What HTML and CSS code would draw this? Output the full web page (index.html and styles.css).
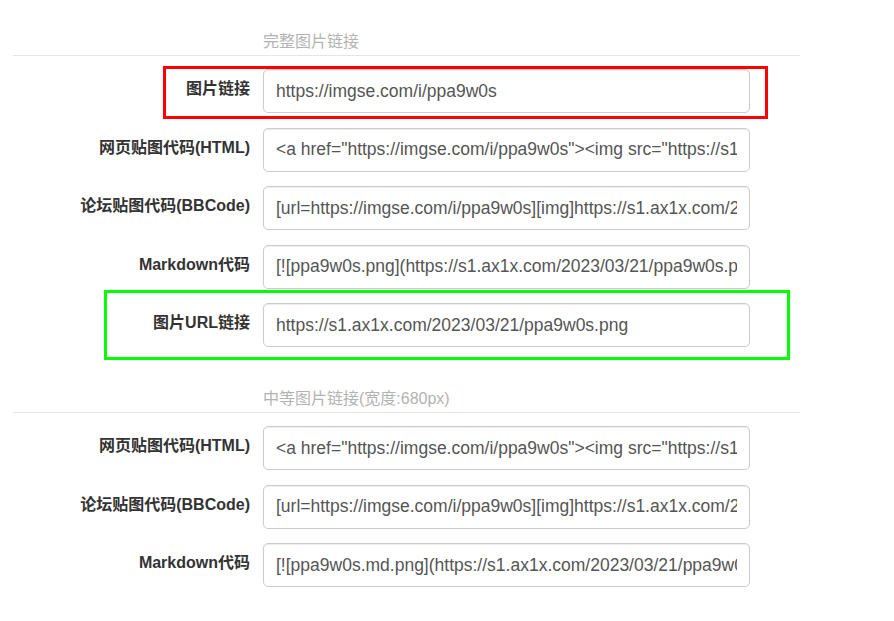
FILE: index.html
```html
<!DOCTYPE html>
<html lang="zh-CN">
<head>
<meta charset="utf-8">
<title>图片链接</title>
<link rel="stylesheet" href="styles.css">
</head>
<body>
<div class="page">
  <section class="group">
    <div class="legend">完整图片链接</div>
    <div class="rows">
      <div class="row">
        <label class="label">图片链接</label>
        <input class="field" readonly value="https://imgse.com/i/ppa9w0s">
        <span class="mark mark-red"></span>
      </div>
      <div class="row">
        <label class="label">网页贴图代码(HTML)</label>
        <input class="field" readonly value="&lt;a href=&quot;https://imgse.com/i/ppa9w0s&quot;&gt;&lt;img src=&quot;https://s1.ax1x.com/2023/03/21/ppa9w0s.png&quot; alt=&quot;ppa9w0s.png&quot; border=&quot;0&quot; /&gt;&lt;/a&gt;">
      </div>
      <div class="row">
        <label class="label">论坛贴图代码(BBCode)</label>
        <input class="field" readonly value="[url=https://imgse.com/i/ppa9w0s][img]https://s1.ax1x.com/2023/03/21/ppa9w0s.png[/img][/url]">
      </div>
      <div class="row">
        <label class="label">Markdown代码</label>
        <input class="field" readonly value="[![ppa9w0s.png](https://s1.ax1x.com/2023/03/21/ppa9w0s.png)](https://imgse.com/i/ppa9w0s)">
      </div>
      <div class="row">
        <label class="label">图片URL链接</label>
        <input class="field" readonly value="https://s1.ax1x.com/2023/03/21/ppa9w0s.png">
        <span class="mark mark-green"></span>
      </div>
    </div>
  </section>
  <section class="group group-second">
    <div class="legend">中等图片链接(宽度:680px)</div>
    <div class="rows">
      <div class="row">
        <label class="label">网页贴图代码(HTML)</label>
        <input class="field" readonly value="&lt;a href=&quot;https://imgse.com/i/ppa9w0s&quot;&gt;&lt;img src=&quot;https://s1.ax1x.com/2023/03/21/ppa9w0s.md.png&quot; alt=&quot;ppa9w0s.md.png&quot; border=&quot;0&quot; /&gt;&lt;/a&gt;">
      </div>
      <div class="row">
        <label class="label">论坛贴图代码(BBCode)</label>
        <input class="field" readonly value="[url=https://imgse.com/i/ppa9w0s][img]https://s1.ax1x.com/2023/03/21/ppa9w0s.md.png[/img][/url]">
      </div>
      <div class="row">
        <label class="label">Markdown代码</label>
        <input class="field" readonly value="[![ppa9w0s.md.png](https://s1.ax1x.com/2023/03/21/ppa9w0s.md.png)](https://imgse.com/i/ppa9w0s)">
      </div>
    </div>
  </section>
</div>
</body>
</html>
```

FILE: styles.css
```css
html, body {
  margin: 0;
  padding: 0;
  background: #fff;
}

body {
  font-family: "Liberation Sans", Arial, "Noto Sans CJK SC", sans-serif;
  color: #333;
}

.page {
  width: 787px;
  margin-left: 13px;
  padding-top: 31px;
}

.legend {
  padding-left: 250px;
  font-size: 16px;
  line-height: 22px;
  color: #b3b3b3;
  padding-bottom: 2px;
  border-bottom: 1px solid #e5e5e5;
}

.rows {
  display: flex;
  flex-direction: column;
  gap: 14.5px;
  margin-top: 13px;
}

.group-second {
  margin-top: 41px;
}

.row {
  position: relative;
  display: grid;
  grid-template-columns: 237px 487px;
  column-gap: 13px;
  align-items: center;
  height: 44px;
}

.label {
  text-align: right;
  font-weight: bold;
  font-size: 16px;
  line-height: 20px;
  color: #333;
  padding-bottom: 4px;
}

.field {
  box-sizing: border-box;
  width: 487px;
  height: 44px;
  margin: 0;
  padding: 0 12px;
  border: 1px solid #ccc;
  border-radius: 5px;
  background: #fff;
  color: #555;
  font-family: "Liberation Sans", Arial, sans-serif;
  font-size: 17.5px;
  outline: none;
  box-shadow: inset 0 1px 1px rgba(0, 0, 0, 0.075);
}

.mark {
  position: absolute;
  box-sizing: border-box;
  pointer-events: none;
}

.mark-red {
  left: 150px;
  top: -3px;
  width: 605px;
  height: 53px;
  border: 3px solid #ff0000;
}

.mark-green {
  left: 91px;
  top: -13px;
  width: 686px;
  height: 70px;
  border: 3px solid #00ff00;
}
```
